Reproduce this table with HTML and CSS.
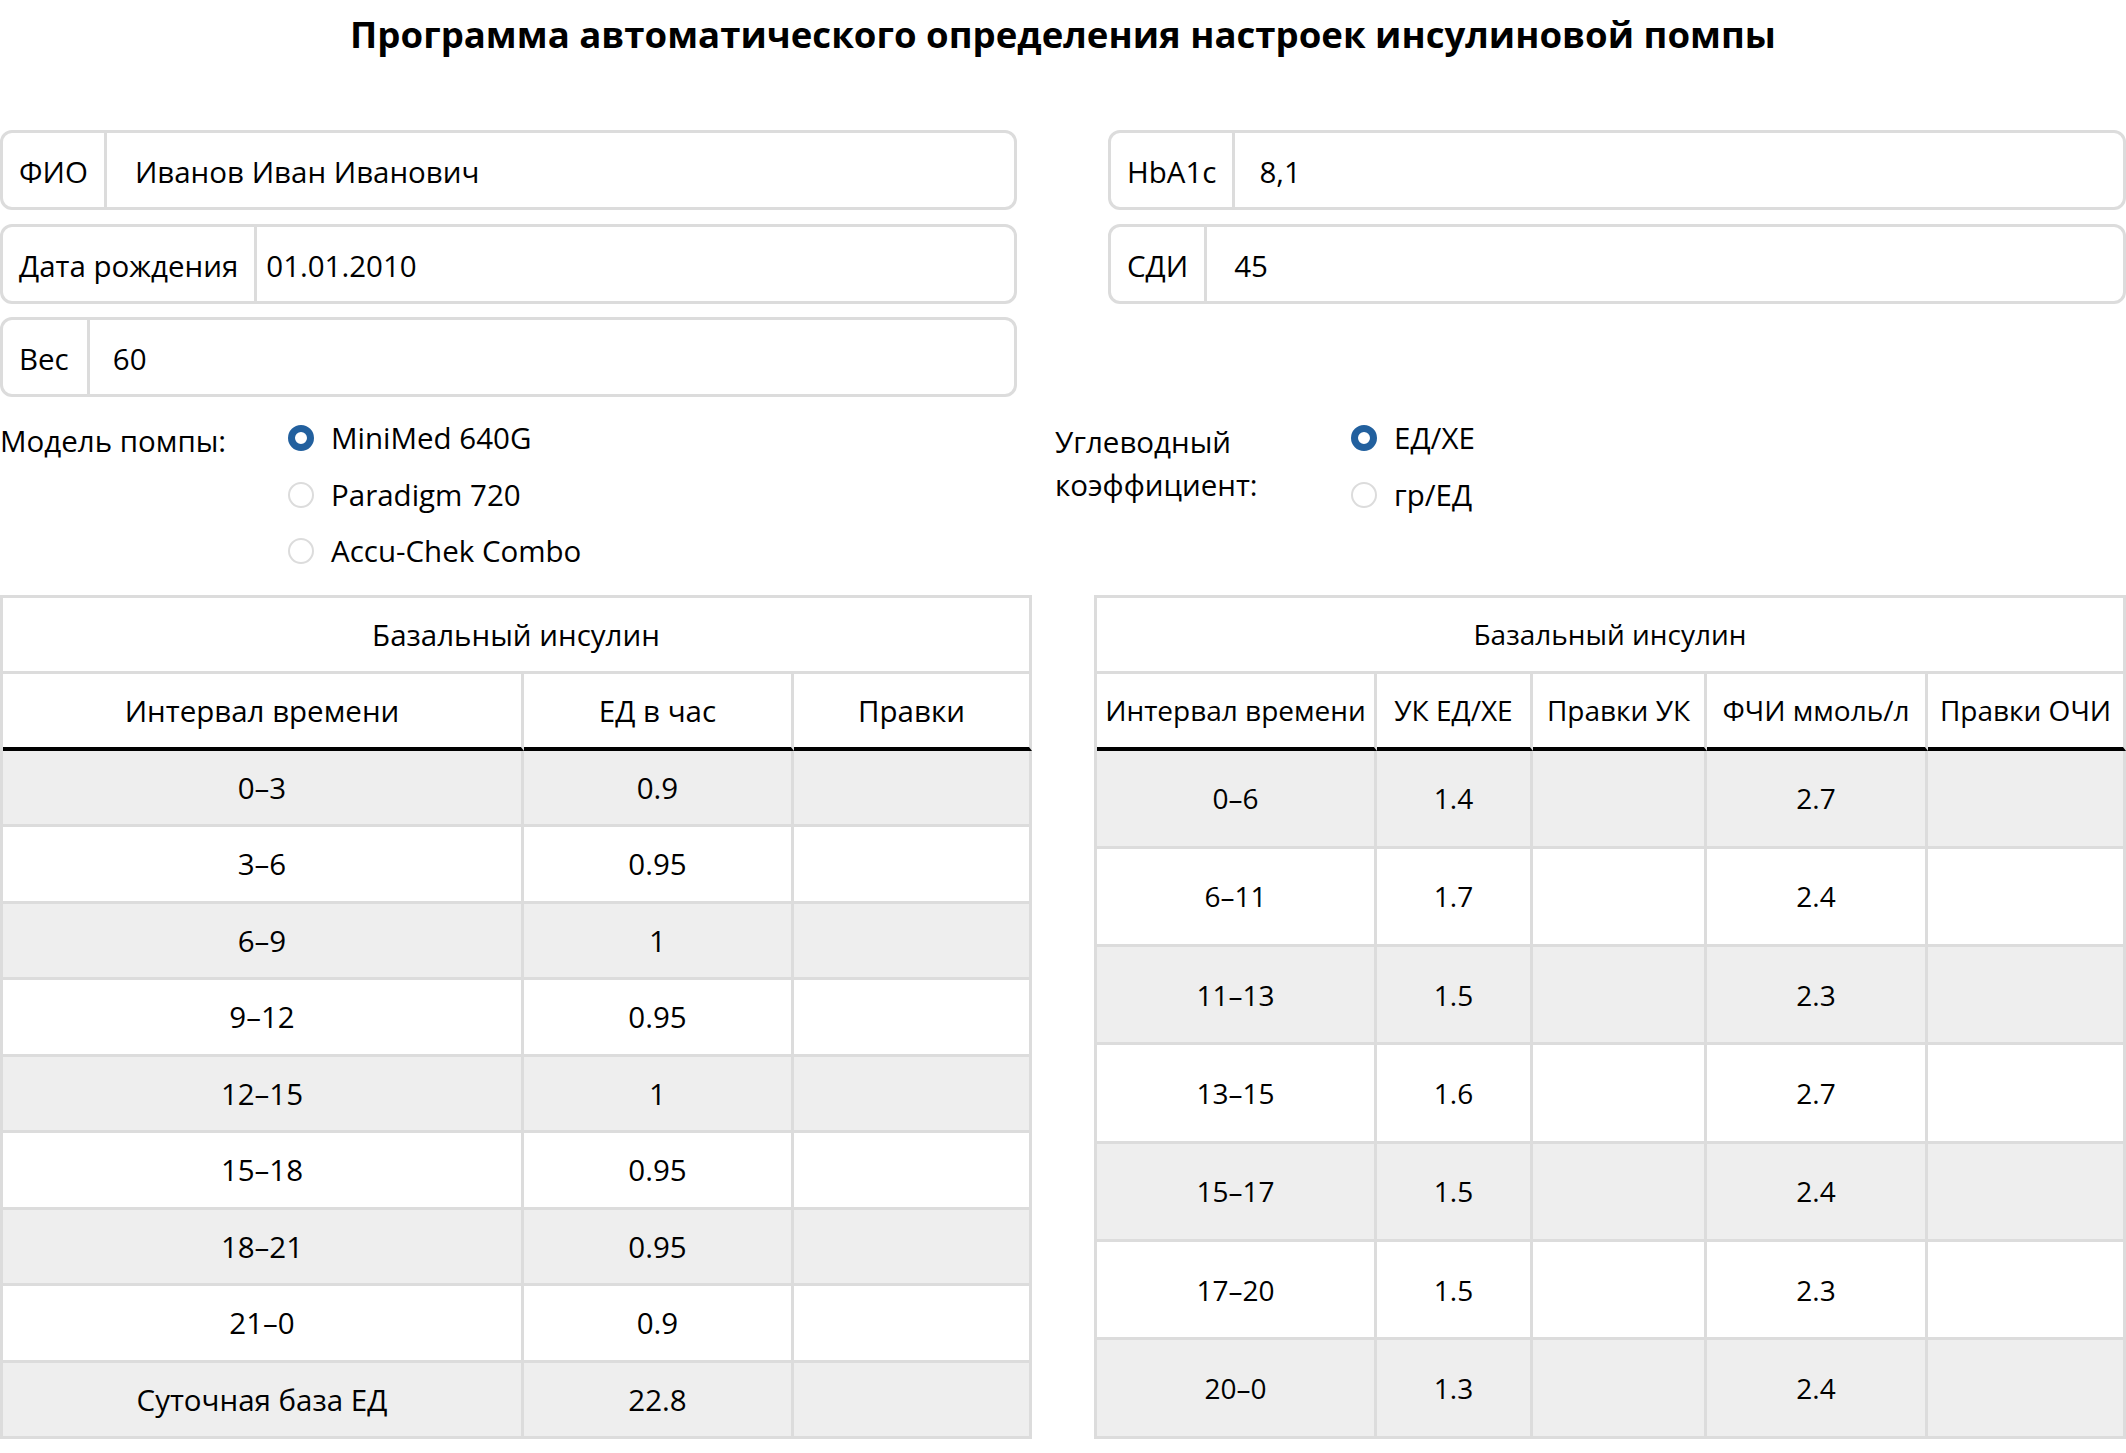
FILE: index.html
```html
<!DOCTYPE html>
<html lang="ru">
<head>
<meta charset="utf-8">
<title>Программа автоматического определения настроек инсулиновой помпы</title>
<link rel="stylesheet" href="styles.css">
</head>
<body>
<h1 class="title">Программа автоматического определения настроек инсулиновой помпы</h1>

<div class="fields">
  <div class="col col-left">
    <div class="field"><span class="addon">ФИО</span><span class="value v-fio">Иванов Иван Иванович</span></div>
    <div class="field"><span class="addon">Дата рождения</span><span class="value v-date">01.01.2010</span></div>
    <div class="field"><span class="addon a-weight">Вес</span><span class="value v-weight">60</span></div>
  </div>
  <div class="col col-right">
    <div class="field"><span class="addon">HbA1c</span><span class="value v-hba">8,1</span></div>
    <div class="field"><span class="addon">СДИ</span><span class="value v-sdi">45</span></div>
  </div>
</div>

<div class="options">
  <div class="opt opt-left">
    <div class="opt-label">Модель помпы:</div>
    <div class="radios">
      <label class="radio"><span class="dot on"></span>MiniMed 640G</label>
      <label class="radio"><span class="dot"></span>Paradigm 720</label>
      <label class="radio"><span class="dot"></span>Accu-Chek Combo</label>
    </div>
  </div>
  <div class="opt opt-right">
    <div class="opt-label two">Углеводный<br>коэффициент:</div>
    <div class="radios">
      <label class="radio"><span class="dot on"></span>ЕД/ХЕ</label>
      <label class="radio"><span class="dot"></span>гр/ЕД</label>
    </div>
  </div>
</div>

<div class="tables">
  <table class="grid grid-left">
    <thead>
      <tr class="cap"><th colspan="3">Базальный инсулин</th></tr>
      <tr class="cols"><th class="l1">Интервал времени</th><th class="l2">ЕД в час</th><th class="l3">Правки</th></tr>
    </thead>
    <tbody>
      <tr><td>0–3</td><td>0.9</td><td></td></tr>
      <tr><td>3–6</td><td>0.95</td><td></td></tr>
      <tr><td>6–9</td><td>1</td><td></td></tr>
      <tr><td>9–12</td><td>0.95</td><td></td></tr>
      <tr><td>12–15</td><td>1</td><td></td></tr>
      <tr><td>15–18</td><td>0.95</td><td></td></tr>
      <tr><td>18–21</td><td>0.95</td><td></td></tr>
      <tr><td>21–0</td><td>0.9</td><td></td></tr>
      <tr><td>Суточная база ЕД</td><td>22.8</td><td></td></tr>
    </tbody>
  </table>

  <table class="grid grid-right">
    <thead>
      <tr class="cap"><th colspan="5">Базальный инсулин</th></tr>
      <tr class="cols"><th class="r1">Интервал времени</th><th class="r2">УК ЕД/ХЕ</th><th class="r3">Правки УК</th><th class="r4">ФЧИ ммоль/л</th><th class="r5">Правки ОЧИ</th></tr>
    </thead>
    <tbody>
      <tr><td>0–6</td><td>1.4</td><td></td><td>2.7</td><td></td></tr>
      <tr><td>6–11</td><td>1.7</td><td></td><td>2.4</td><td></td></tr>
      <tr><td>11–13</td><td>1.5</td><td></td><td>2.3</td><td></td></tr>
      <tr><td>13–15</td><td>1.6</td><td></td><td>2.7</td><td></td></tr>
      <tr><td>15–17</td><td>1.5</td><td></td><td>2.4</td><td></td></tr>
      <tr><td>17–20</td><td>1.5</td><td></td><td>2.3</td><td></td></tr>
      <tr><td>20–0</td><td>1.3</td><td></td><td>2.4</td><td></td></tr>
    </tbody>
  </table>
</div>
</body>
</html>
```

FILE: styles.css
```css
* { box-sizing: border-box; }

html, body {
  margin: 0;
  padding: 0;
  background: #fff;
  color: #000;
  font-family: "Open Sans", "Noto Sans", "DejaVu Sans", sans-serif;
  font-size: 29.5px;
}

.title {
  margin: 10px 0 0;
  font-size: 36.6px;
  line-height: 49px;
  font-weight: 700;
  text-align: center;
}

/* ---------- input groups ---------- */
.fields {
  margin-top: 71px;
  display: flex;
}
.col {
  width: 1063px;
  display: flex;
  flex-direction: column;
  gap: 13.5px;
}
.col-left { padding-right: 46px; }
.col-right { padding-left: 45px; }

.field {
  height: 80px;
  display: flex;
  align-items: stretch;
  border: 3px solid #dcdcdc;
  border-radius: 12px;
}
.addon {
  display: flex;
  align-items: center;
  padding: 3px 16px 0 16px;
  border-right: 3px solid #dcdcdc;
  white-space: nowrap;
}
.a-weight { padding-right: 18px; }
.value {
  display: flex;
  align-items: center;
  padding-top: 3px;
  white-space: nowrap;
}
.v-fio { padding-left: 28px; }
.v-date { padding-left: 9px; }
.v-weight { padding-left: 23px; }
.v-hba { padding-left: 24px; }
.v-sdi { padding-left: 27px; }

/* ---------- radio options ---------- */
.options {
  margin-top: 13px;
  display: flex;
}
.opt { display: flex; }
.opt-left { width: 1055px; }
.opt-left .opt-label { width: 288px; }
.opt-right .opt-label { width: 296px; }

.opt-label {
  padding-top: 3px;
  line-height: 56.5px;
}
.opt-label.two {
  line-height: 43px;
  padding-top: 10px;
}

.radios {
  display: flex;
  flex-direction: column;
}
.radio {
  display: flex;
  align-items: center;
  height: 56.5px;
  line-height: 56.5px;
  white-space: nowrap;
}
.dot {
  flex: none;
  width: 26px;
  height: 26px;
  margin-right: 17px;
  border-radius: 50%;
  border: 2px solid #dcdcdc;
  background: #fff;
}
.dot.on {
  border: 7px solid #22609e;
}

/* ---------- tables ---------- */
.tables {
  margin-top: 15px;
  display: flex;
  gap: 62px;
  align-items: flex-start;
}
.grid {
  width: 1032px;
  border-collapse: separate;
  border-spacing: 0;
  border-top: 3px solid #dcdcdc;
  border-left: 3px solid #dcdcdc;
  flex: none;
}
.grid th,
.grid td {
  padding: 0;
  text-align: center;
  vertical-align: middle;
  font-weight: 400;
  border-right: 3px solid #dcdcdc;
  border-bottom: 3px solid #dcdcdc;
  white-space: nowrap;
}
.grid tr.cap { height: 76px; }
.grid tr.cols { height: 77px; }
.grid tr.cols th { border-bottom: 4px solid #000; }
.grid tbody tr:nth-child(odd) td { background: #eeeeee; }

.grid-left tbody tr { height: 76.5px; }
.grid-right tbody tr { height: 98.3px; }
.grid-right { font-size: 28px; }

.l1 { width: 521px; }
.l2 { width: 270px; }
.l3 { width: 238px; }

.r1 { width: 280px; }
.r2 { width: 156px; }
.r3 { width: 174px; }
.r4 { width: 221px; }
.r5 { width: 198px; }
```
